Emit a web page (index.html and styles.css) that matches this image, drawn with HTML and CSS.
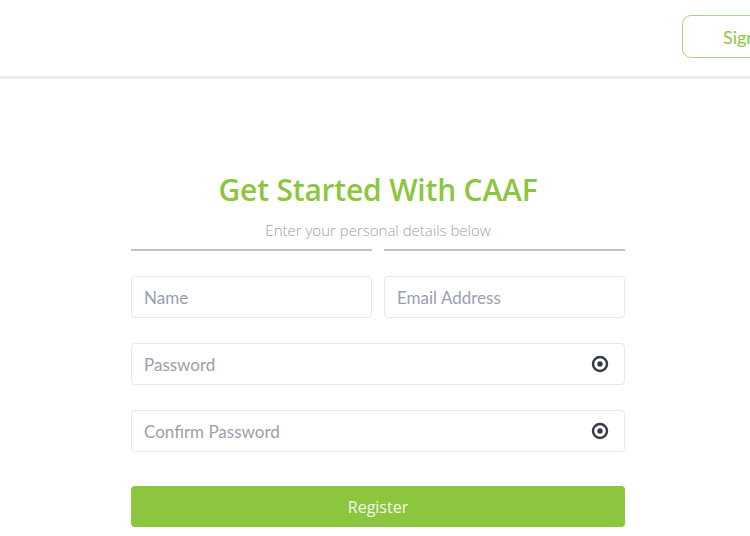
FILE: index.html
```html
<!DOCTYPE html>
<html>
<head>
<meta charset="utf-8">
<link rel="stylesheet" href="styles.css">
</head>
<body>
<header class="topbar">
  <a class="signin" href="#">Sign In</a>
</header>
<main class="page">
  <form class="card">
    <h1 class="title">Get Started With CAAF</h1>
    <p class="subtitle">Enter your personal details below</p>
    <div class="rules"><span></span><span></span></div>
    <div class="row two">
      <div class="field"><input type="text" placeholder="Name"></div>
      <div class="field"><input type="text" placeholder="Email Address"></div>
    </div>
    <div class="row">
      <div class="field">
        <input type="password" placeholder="Password">
        <svg class="eye" viewBox="0 0 18 18" width="18" height="18"><circle cx="9" cy="9" r="7" fill="none" stroke="#353b45" stroke-width="2.4"/><circle cx="9" cy="9" r="2.7" fill="#353b45"/></svg>
      </div>
    </div>
    <div class="row">
      <div class="field">
        <input type="password" placeholder="Confirm Password">
        <svg class="eye" viewBox="0 0 18 18" width="18" height="18"><circle cx="9" cy="9" r="7" fill="none" stroke="#353b45" stroke-width="2.4"/><circle cx="9" cy="9" r="2.7" fill="#353b45"/></svg>
      </div>
    </div>
    <button class="register" type="button">Register</button>
  </form>
</main>
</body>
</html>
```
FILE: styles.css
```css
* { box-sizing: border-box; }
html, body { margin: 0; padding: 0; background: #fff; overflow: hidden; }
body { font-family: "Open Sans", "Noto Sans", sans-serif; width: 750px; height: 536px; }

.topbar {
  height: 79px;
  border-bottom: 3px solid #ececec;
  display: flex;
  justify-content: flex-end;
  padding-top: 15px;
  overflow: hidden;
}
.signin {
  display: flex;
  align-items: center;
  height: 43px;
  width: 110px;
  margin-right: -42px;
  padding-left: 40px;
  border: 1px solid #a9d77a;
  border-radius: 9px;
  color: #8cc63f;
  text-decoration: none;
  font-family: "Lato", "Open Sans", sans-serif;
  font-size: 18px;
  white-space: nowrap;
  overflow: hidden;
}

.page { display: flex; padding-left: 131px; padding-top: 91px; }
.card { width: 494px; display: flex; flex-direction: column; }
.title {
  margin: 0;
  text-align: center;
  color: #8cc63f;
  font-size: 30px;
  font-weight: 600;
  line-height: 40px;
  letter-spacing: -0.2px;
}
.subtitle {
  margin: 9px 0 0;
  text-align: center;
  color: #a2a2aa;
  font-size: 15px;
  font-weight: 300;
  line-height: 22px;
}
.rules { display: flex; gap: 12px; margin-top: 8px; }
.rules span { flex: 1; height: 2px; background: #bfc2cd; }

.row { display: flex; gap: 12px; margin-top: 25px; }
.row.two { margin-top: 25px; }
.field { flex: 1; position: relative; }
.field input {
  width: 100%;
  height: 42px;
  border: 1px solid #e6e8ec;
  border-radius: 4px;
  padding: 0 12px;
  font-family: "Lato", "Nunito", sans-serif;
  font-size: 17px;
  color: #333;
  outline: none;
  background: #fff;
}
.field input::placeholder { color: #99a0ad; }
.eye { position: absolute; right: 16px; top: 12px; }

.register {
  margin-top: 34px;
  height: 41px;
  border: 0;
  border-radius: 4px;
  background: #8cc63f;
  color: #f2f8ea;
  font-family: "Open Sans", "Noto Sans", sans-serif;
  font-size: 16px;
}
```
